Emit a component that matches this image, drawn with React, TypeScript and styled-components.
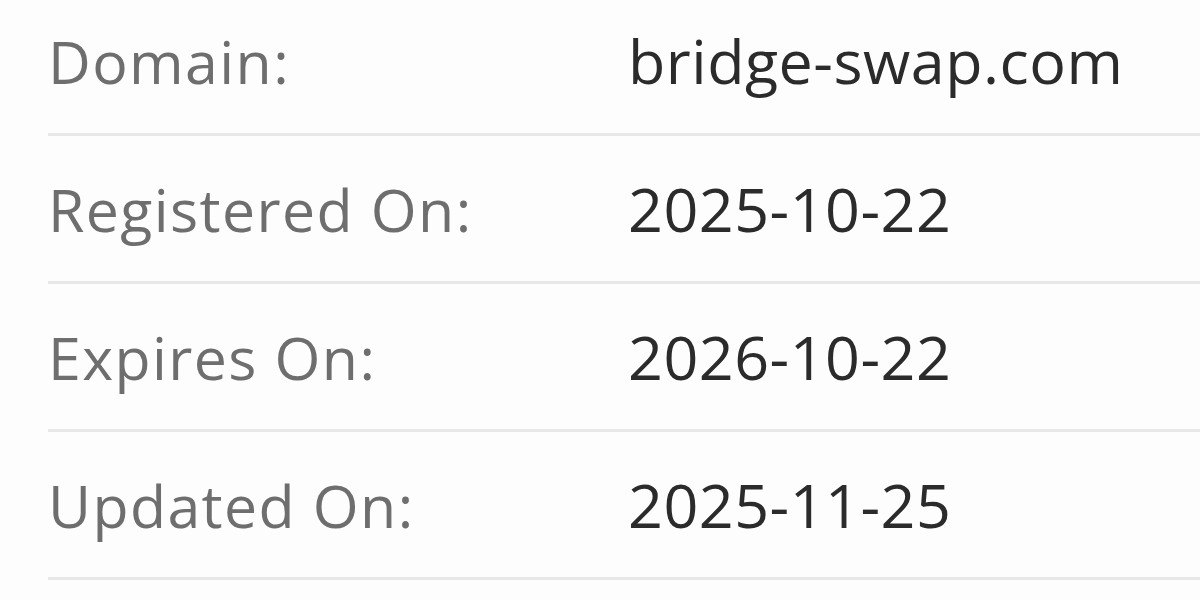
import styled, { createGlobalStyle } from "styled-components";

const GlobalStyle = createGlobalStyle`
  html, body {
    margin: 0;
    padding: 0;
    background: #fdfdfd;
    overflow: hidden;
  }
  body {
    font-family: "Open Sans", "Liberation Sans", sans-serif;
  }
`;

const rows = [
  { label: "Domain:", value: "bridge-swap.com" },
  { label: "Registered On:", value: "2025-10-22" },
  { label: "Expires On:", value: "2026-10-22" },
  { label: "Updated On:", value: "2025-11-25" },
];

export default function App() {
  return (
    <>
      <GlobalStyle />
      <Table>
        {rows.map((row) => (
          <Row key={row.label}>
            <Label>{row.label}</Label>
            <Value>{row.value}</Value>
          </Row>
        ))}
      </Table>
    </>
  );
}

const Table = styled.div`
  display: flex;
  flex-direction: column;
  margin-top: -12px;
  padding-left: 48px;
  width: 1152px;
`;

const Row = styled.div`
  display: grid;
  grid-template-columns: 580px 1fr;
  align-items: center;
  height: 145px;
  border-bottom: 3px solid #e8e8e8;
`;

const Label = styled.span`
  font-size: 59px;
  letter-spacing: 1.4px;
  color: #6e6e6e;
  white-space: nowrap;
`;

const Value = styled.span`
  font-size: 61px;
  letter-spacing: 0.5px;
  color: #2b2b2b;
  white-space: nowrap;
`;
